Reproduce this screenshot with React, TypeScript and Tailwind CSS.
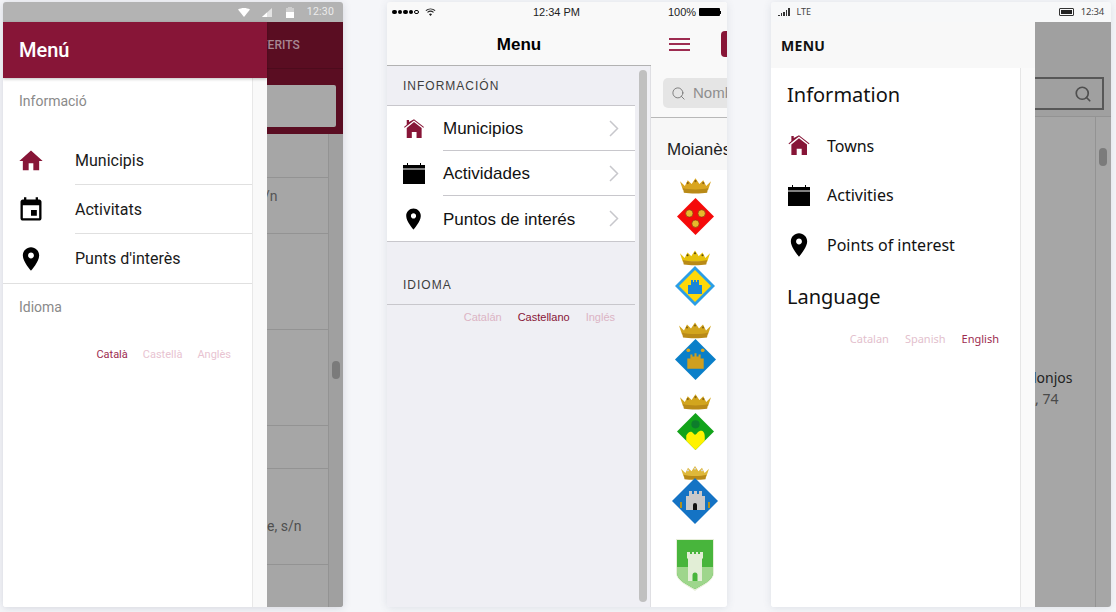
import type { ReactNode } from "react";
import { Search } from "lucide-react";

function MdHome({ className }: { className?: string }) {
  return (
    <svg viewBox="0 0 24 24" className={className} fill="currentColor">
      <path d="M10 20v-6h4v6h5v-8h3L12 3 2 12h3v8z" />
    </svg>
  );
}

function MdEvent({ className }: { className?: string }) {
  return (
    <svg viewBox="0 0 24 24" className={className} fill="currentColor">
      <path d="M17 12h-5v5h5v-5zM16 1v2H8V1H6v2H5c-1.11 0-1.99.9-1.99 2L3 19c0 1.1.89 2 2 2h14c1.1 0 2-.9 2-2V5c0-1.1-.9-2-2-2h-1V1h-2zm3 18H5V8h14v11z" />
    </svg>
  );
}

function Pin({ className }: { className?: string }) {
  return (
    <svg viewBox="0 0 24 24" className={className} fill="currentColor">
      <path d="M12 2C8.13 2 5 5.13 5 9c0 5.25 7 13 7 13s7-7.75 7-13c0-3.87-3.13-7-7-7zm0 9.5c-1.38 0-2.5-1.12-2.5-2.5s1.12-2.5 2.5-2.5 2.5 1.12 2.5 2.5-1.12 2.5-2.5 2.5z" />
    </svg>
  );
}

// ios style house: roof line sits apart from the body, with a chimney
function IosHome({ className }: { className?: string }) {
  return (
    <svg viewBox="0 0 22 22" className={className} fill="currentColor">
      <path d="M3 1h2.5v2.2L11 .2l11 8.6-.7.9L11 1.7.7 9.7 0 8.8l3-2.4z" />
      <path d="M11 3.400l8.400 6.500V21h-5.600v-6.600H8.600V21H3V9.900z" />
    </svg>
  );
}

function IosCalendar({ className }: { className?: string }) {
  return (
    <svg viewBox="0 0 22 21" className={className} fill="currentColor">
      <path d="M0 2h4V0h1v2h12V0h1v2h4v3.600H0z" />
      <path d="M0 6.600h22V21H0z" />
    </svg>
  );
}

function Disclosure() {
  return (
    <svg viewBox="0 0 10 17" className="w-[10px] h-[17px]" fill="none" stroke="#c7c7cc" strokeWidth="1.500">
      <path d="M1 1l7.500 7.500L1 16" />
    </svg>
  );
}

function Crown({ band, dots, className }: { band: string; dots: string; className: string }) {
  return (
    <svg viewBox="0 0 32 16" className={`${className} block`}>
      <path d="M0 3l5 5 3-6 4 4 4-6 4 6 4-4 3 6 5-5-3 9H3z" fill={band} />
      <path d="M3 10c6 2 20 2 26 0l-1 5c-6 1-18 1-24 0z" fill="#b98a17" />
      <circle cx="8" cy="5" r="1.100" fill={dots} />
      <circle cx="16" cy="3" r="1.100" fill={dots} />
      <circle cx="24" cy="5" r="1.100" fill={dots} />
    </svg>
  );
}

function Arms() {
  return (
    <div className="flex flex-col items-center pl-[12px]">
      {/* red, three bowls */}
      <div className="h-[72px] pt-[8px] flex flex-col items-center">
        <Crown band="#d9a520" dots="#8a5f10" className="w-[31px] h-[16px]" />
        <svg viewBox="0 0 36 36" className="w-[37px] h-[37px] mt-[4px]">
          <path d="M18 0l18 18-18 18L0 18z" fill="#f50a0a" />
          <circle cx="12" cy="15" r="3.600" fill="#e8b92c" stroke="#8c3b12" strokeWidth="0.700" />
          <circle cx="24" cy="15" r="3.600" fill="#e8b92c" stroke="#8c3b12" strokeWidth="0.700" />
          <circle cx="18" cy="25" r="3.600" fill="#e8b92c" stroke="#8c3b12" strokeWidth="0.700" />
        </svg>
      </div>
      {/* yellow, blue castle */}
      <div className="h-[72px] pt-[8px] flex flex-col items-center">
        <Crown band="#e6c10c" dots="#5b4a10" className="w-[30px] h-[16px]" />
        <svg viewBox="0 0 40 40" className="w-[40px] h-[40px]">
          <path d="M20 0l20 20-20 20L0 20z" fill="#2b9ee6" />
          <path d="M20 4l16 16-16 16L4 20z" fill="#ffd809" />
          <path d="M13 28v-9h3v-5h2v2h1v-2h2v2h1v-2h2v5h3v9z" fill="#1b86d8" />
        </svg>
      </div>
      {/* blue, gold castle */}
      <div className="h-[72px] pt-[8px] flex flex-col items-center">
        <Crown band="#d2a51d" dots="#8a6410" className="w-[32px] h-[17px]" />
        <svg viewBox="0 0 40 40" className="w-[41px] h-[41px]">
          <path d="M20 0l20 20-20 20L0 20z" fill="#0a7fc9" />
          <circle cx="13" cy="11" r="1.800" fill="#d9a520" />
          <circle cx="27" cy="11" r="1.800" fill="#d9a520" />
          <path d="M12 29v-10h3v-4h2v2h2v-3h2v3h2v-2h2v4h3v10z" fill="#cf9f1f" />
        </svg>
      </div>
      {/* green, yellow mount */}
      <div className="h-[72px] pt-[8px] flex flex-col items-center">
        <Crown band="#d2a51d" dots="#8a6410" className="w-[31px] h-[16px]" />
        <svg viewBox="0 0 36 36" className="w-[37px] h-[37px] mt-[3px]">
          <path d="M18 0l18 18-18 18L0 18z" fill="#12a31a" />
          <path d="M18 36l-9-9v-5c2-4 5-5 7-2 1 2 3 1 4-1 3-3 7-2 7 4v4z" fill="#fff200" />
          <circle cx="18" cy="11" r="4" fill="#0d7d2c" />
        </svg>
      </div>
      {/* blue, grey castle */}
      <div className="h-[72px] pt-[8px] flex flex-col items-center">
        <Crown band="#dfb83a" dots="#d8d8e0" className="w-[34px] h-[14px]" />
        <svg viewBox="0 0 46 46" className="w-[46px] h-[46px] -mt-[2px]">
          <path d="M23 0l23 23-23 23L0 23z" fill="#1473c4" />
          <path d="M14 32V18h3v-5h3v3h2v-3h3v3h2v-3h3v5h3v14z" fill="#c9c9c9" />
          <path d="M21 32v-5a2 2 0 014 0v5z" fill="#111" />
          <path d="M8 24h2v6H8zM36 24h2v6h-2z" fill="#b2901c" />
        </svg>
      </div>
      {/* green shield */}
      <div className="pt-[9px]">
        <svg viewBox="0 0 38 52" className="w-[38px] h-[52px] block">
          <path d="M0 0h38v34c0 8-12 13-19 18C12 47 0 42 0 34z" fill="#e6eed8" />
          <path d="M1 1h36v33c0 7-11 12-18 16-7-4-18-9-18-16z" fill="#48b53c" />
          <path d="M1 28h36v6c0 7-11 12-18 16-7-4-18-9-18-16z" fill="#9ed68c" />
          <path d="M12 42V20l-1-1v-6h3v2h2v-2h2v2h2v-2h2v2h2v-2h3v6l-1 1v22z" fill="#e2eed6" />
          <path d="M16.500 42v-6a2.500 2.500 0 015 0v6z" fill="#48b53c" />
        </svg>
      </div>
    </div>
  );
}

// what sits behind the first drawer: a dimmed list
function DimRow({ h, children }: { h: string; children?: ReactNode }) {
  return (
    <div className={`${h} border-b border-[#939393] overflow-hidden`}>{children}</div>
  );
}

function AndroidPhone() {
  return (
    <div className="w-[340px] h-[605px] rounded-[3px] overflow-hidden shadow-[0_1px_8px_rgba(60,70,100,0.18)] flex flex-col font-['Roboto',sans-serif]">
      <div className="h-[20px] bg-[#b3b3b3] flex items-center justify-end gap-[12px] pr-[9px]">
        <svg viewBox="0 0 12 9" className="w-[12px] h-[9px]">
          <path d="M0 1.500C3.500-.5 8.500-.5 12 1.500L6 9z" fill="#fff" />
        </svg>
        <svg viewBox="0 0 10 9" className="w-[10px] h-[9px]">
          <path d="M10 0v9H0z" fill="#e3e3e3" />
          <path d="M5 4.500V9H0z" fill="#fff" />
        </svg>
        <svg viewBox="0 0 8 11" className="w-[8px] h-[11px] ml-[2px]">
          <path d="M2 0h4v1h2v10H0V1h2z" fill="#cfcfcf" />
          <path d="M0 5h8v6H0z" fill="#fff" />
        </svg>
        <span className="text-[10.500px] leading-none text-[#ececec] ml-[1px] tracking-[0.2px]">12:30</span>
      </div>
      <div className="flex-1 flex min-h-0">
        <div className="w-[264px] flex flex-col z-10">
          <div className="h-[56px] bg-[#871537] shadow-[0_1px_3px_rgba(0,0,0,0.25)] flex items-center pl-[16px] text-[20px] font-medium text-white z-10">
            Menú
          </div>
          <div className="flex-1 flex bg-[#f9f9f9]">
            <div className="w-[250px] bg-white border-r border-[#e8e8e8]">
              <div className="h-[50px] pl-[16px] pt-[14px] text-[14px] leading-[18px] text-[#8a8a8a]">Informació</div>
              <div className="pt-[8px]">
                {[
                  { label: "Municipis", icon: <MdHome className="w-[28px] h-[28px] text-[#871537]" /> },
                  { label: "Activitats", icon: <MdEvent className="w-[28px] h-[28px] text-black" /> },
                  { label: "Punts d'interès", icon: <Pin className="w-[28px] h-[28px] text-black" /> },
                ].map((row, i) => (
                  <div key={row.label} className="h-[49px] flex items-center">
                    <div className="w-[72px] pl-[14px] shrink-0">{row.icon}</div>
                    <div className={`flex-1 h-full flex items-center text-[16px] text-[#1a1a1a] ${i < 2 ? "border-b border-[#e0e0e0] pt-[1px]" : ""}`}>
                      {row.label}
                    </div>
                  </div>
                ))}
              </div>
              <div className="border-t border-[#e0e0e0] pl-[16px] pt-[14px] text-[14px] leading-[18px] text-[#8a8a8a]">Idioma</div>
              <div className="flex justify-end gap-[15px] pr-[21px] pt-[32px] text-[11px] leading-[14px]">
                <span className="text-[#9d2b50]">Català</span>
                <span className="text-[#e8c3d1]">Castellà</span>
                <span className="text-[#e8c3d1]">Anglès</span>
              </div>
            </div>
          </div>
        </div>
        <div className="flex-1 min-w-0 flex flex-col bg-[#a6a6a6]">
          <div className="h-[112px] bg-[#5a0d22] flex flex-col">
            <div className="h-[47px] border-b border-[#4d0b1d] flex items-center overflow-hidden text-[12px] font-medium text-[#a88893]">
              <span className="-ml-[6px]">FERITS</span>
            </div>
            <div className="pt-[16px] pr-[7px]">
              <div className="h-[42px] bg-[#a8a8a8] rounded-r-[2px]" />
            </div>
          </div>
          <div className="flex-1 flex min-h-0">
            <div className="w-[62px] border-r border-[#939393] text-[#555]">
              <DimRow h="h-[44px]" />
              <DimRow h="h-[56px]"><span className="block pt-[9px] leading-[18px] -ml-[3px] text-[14px]">/n</span></DimRow>
              <DimRow h="h-[96px]" />
              <DimRow h="h-[96px]" />
              <DimRow h="h-[43px]" />
              <DimRow h="h-[96px]"><span className="block pt-[48px] leading-[18px] text-[14px] text-[#4f4f4f] whitespace-nowrap">e, s/n</span></DimRow>
            </div>
            <div className="flex-1 bg-[#a0a0a0] pl-[3px] pt-[227px]">
              <div className="w-[8px] h-[18px] rounded-[4px] bg-[#7b7b7b]" />
            </div>
          </div>
        </div>
      </div>
    </div>
  );
}

function IosPhone() {
  return (
    <div className="w-[340px] h-[605px] rounded-[3px] overflow-hidden shadow-[0_1px_8px_rgba(60,70,100,0.12)] flex font-['Liberation_Sans',sans-serif]">
      <div className="w-[264px] flex flex-col bg-[#efeff4]">
        <div className="h-[64px] bg-[#f9f9f9] border-b border-[#b2b2b2] flex flex-col">
          <div className="h-[20px] flex items-center pl-[5px]">
            <div className="flex gap-[1px]">
              {[0, 1, 2, 3].map((d) => (
                <div key={d} className="w-[4.500px] h-[4.500px] rounded-full bg-black" />
              ))}
              <div className="w-[4.500px] h-[4.500px] rounded-full border-[0.5px] border-black" />
            </div>
            <svg viewBox="0 0 12 9" className="w-[11px] h-[8px] ml-[6px]" fill="none" stroke="#222" strokeWidth="1.200">
              <path d="M.8 3c3-2.600 7.400-2.600 10.400 0M2.600 5c2-1.700 4.800-1.700 6.800 0" />
              <path d="M6 9L4.300 6.900c1-.8 2.400-.8 3.400 0z" fill="#222" stroke="none" />
            </svg>
            <span className="flex-1 text-right pr-[71px] text-[11px] font-medium text-[#222]">12:34 PM</span>
          </div>
          <div className="flex-1 flex items-center justify-center pt-[2px] text-[17px] font-bold text-black">Menu</div>
        </div>
        <div className="flex-1 flex min-h-0">
          <div className="w-[249px] flex flex-col">
            <div className="h-[40px] flex items-center pl-[16px] text-[12px] tracking-[1px] text-[#3d3d3d] border-b border-[#c8c7cc]">
              INFORMACIÓN
            </div>
            <div className="bg-white border-b border-[#c8c7cc]">
              {[
                { label: "Municipios", icon: <IosHome className="w-[22px] h-[20px] text-[#871537]" /> },
                { label: "Actividades", icon: <IosCalendar className="w-[22px] h-[21px] text-black" /> },
                { label: "Puntos de interés", icon: <Pin className="w-[28px] h-[28px] text-black" /> },
              ].map((row, i) => (
                <div key={row.label} className="h-[45px] flex items-center">
                  <div className="w-[56px] shrink-0 pl-[14px] flex justify-center pr-[17px]">{row.icon}</div>
                  <div className={`flex-1 h-full flex items-center justify-between pr-[16px] text-[17px] text-[#111] ${i < 2 ? "border-b border-[#c8c7cc]" : ""}`}>
                    <span className="pt-[2px]">{row.label}</span>
                    <Disclosure />
                  </div>
                </div>
              ))}
            </div>
            <div className="h-[63px] flex items-end pb-[11px] pl-[16px] text-[12px] leading-[16px] tracking-[1px] text-[#3d3d3d] border-b border-[#c8c7cc]">
              IDIOMA
            </div>
            <div className="flex justify-end gap-[16px] pr-[20px] pt-[6px] text-[11px] leading-[13px]">
              <span className="text-[#dcb4c4]">Catalán</span>
              <span className="text-[#871537]">Castellano</span>
              <span className="text-[#dcb4c4]">Inglés</span>
            </div>
          </div>
          <div className="flex-1 pt-[4px] pb-[5px] pl-[4px] pr-[3px] border-r border-[#dfdfe3]">
            <div className="w-[8px] h-full rounded-[4px] bg-[#c0c0c0]" />
          </div>
        </div>
      </div>
      <div className="flex-1 min-w-0 flex flex-col bg-white overflow-hidden">
        <div className="h-[116px] bg-[#f9f9f9] border-b border-[#b8b8b8] flex flex-col">
          <div className="h-[20px] flex items-center pl-[17px] text-[11px] font-medium text-[#222]">
            100%
            <div className="ml-[3px] w-[21px] h-[8px] bg-black rounded-[1px]" />
            <div className="w-[1px] h-[3px] bg-black" />
          </div>
          <div className="h-[44px] flex items-center justify-between">
            <div className="ml-[18px] w-[21px] flex flex-col gap-[3.500px]">
              <div className="h-[2px] bg-[#9d2b50]" />
              <div className="h-[2px] bg-[#9d2b50]" />
              <div className="h-[2px] bg-[#9d2b50]" />
            </div>
            <div className="w-[6px] h-[26px] bg-[#871537] rounded-l-[4px]" />
          </div>
          <div className="pl-[12px] pt-[12px]">
            <div className="h-[30px] bg-[#e5e5e5] rounded-l-[5px] flex items-center pl-[8px] overflow-hidden">
              <Search size={15} strokeWidth={1.5} className="text-[#7a7a7a] shrink-0" />
              <span className="ml-[7px] text-[15px] text-[#8e8e8e] whitespace-nowrap">Nombre</span>
            </div>
          </div>
        </div>
        <div className="h-[52px] bg-[#f7f7f7] flex items-center pl-[16px] pt-[11px] text-[17px] text-[#222] whitespace-nowrap">Moianès</div>
        <Arms />
      </div>
    </div>
  );
}

function WindowsPhone() {
  return (
    <div className="w-[340px] h-[605px] rounded-[3px] overflow-hidden shadow-[0_1px_8px_rgba(60,70,100,0.12)] flex flex-col font-['Noto_Sans',sans-serif]">
      <div className="h-[20px] bg-[#f7f8f9] flex items-center pl-[7px] pr-[7px] text-[9px] text-[#444]">
        <div className="flex items-end gap-[1px] h-[8px]">
          <div className="w-[1.500px] h-[1.500px] bg-[#333]" />
          <div className="w-[1.500px] h-[3px] bg-[#333]" />
          <div className="w-[1.500px] h-[4.500px] bg-[#333]" />
          <div className="w-[1.500px] h-[6px] bg-[#333]" />
          <div className="w-[1.500px] h-[8px] bg-[#333]" />
        </div>
        <span className="ml-[7px]">LTE</span>
        <div className="ml-auto w-[15px] h-[8px] border border-[#333] p-[1px] rounded-[1px]">
          <div className="h-full bg-[#222]" />
        </div>
        <span className="ml-[7px] text-[9.500px] tracking-[-0.2px]">12:34</span>
      </div>
      <div className="flex-1 flex min-h-0">
        <div className="w-[264px] flex flex-col">
          <div className="h-[46px] bg-[#f8f8f8] flex items-center pl-[10px] text-[14px] font-bold tracking-[0.3px] text-[#111]">MENU</div>
          <div className="flex-1 flex bg-[#fafafa]">
            <div className="w-[250px] bg-white border-r border-[#e6e6e6] text-[#111]">
              <div className="pl-[16px] pt-[12px] text-[20px] leading-[30px]">Information</div>
              <div className="pt-[11px]">
                {[
                  { label: "Towns", icon: <IosHome className="w-[22px] h-[21px] text-[#871537]" /> },
                  { label: "Activities", icon: <IosCalendar className="w-[22px] h-[21px] text-black" /> },
                  { label: "Points of interest", icon: <Pin className="w-[28px] h-[28px] text-black" /> },
                ].map((row) => (
                  <div key={row.label} className="h-[49.500px] flex items-center">
                    <div className="w-[56px] shrink-0 flex justify-center">{row.icon}</div>
                    <span className="text-[16px]">{row.label}</span>
                  </div>
                ))}
              </div>
              <div className="pl-[16px] pt-[12px] text-[20px] leading-[30px]">Language</div>
              <div className="flex justify-end gap-[16px] pr-[21px] pt-[19px] text-[11px] leading-[15px]">
                <span className="text-[#e3bfcd]">Catalan</span>
                <span className="text-[#e3bfcd]">Spanish</span>
                <span className="text-[#9d2b50]">English</span>
              </div>
            </div>
          </div>
        </div>
        <div className="flex-1 min-w-0 flex flex-col bg-[#a6a6a6]">
          <div className="h-[95px] bg-[#a0a0a0] border-b border-[#939393] pt-[55px] pr-[7px]">
            <div className="h-[33px] border-2 border-l-0 border-[#575757] flex items-center justify-end pr-[10px]">
              <Search size={18} strokeWidth={2.25} className="text-[#4f4f4f]" />
            </div>
          </div>
          <div className="flex-1 flex min-h-0">
            <div className="w-[61px] border-r border-[#939393] overflow-hidden pt-[251px]">
              <div className="text-[14px] leading-[20px] text-[#222] -ml-[2px] whitespace-nowrap">lonjos</div>
              <div className="text-[14px] leading-[20px] text-[#4a4a4a] mt-[1px]">, 74</div>
            </div>
            <div className="flex-1 pl-[3px] pt-[31px]">
              <div className="w-[8px] h-[18px] rounded-[4px] bg-[#7b7b7b]" />
            </div>
          </div>
        </div>
      </div>
    </div>
  );
}

export default function App() {
  return (
    <div className="w-[1116px] h-[612px] overflow-hidden bg-[#f5f6f9] flex gap-[44px] pl-[3px] pt-[2px]">
      <AndroidPhone />
      <IosPhone />
      <WindowsPhone />
    </div>
  );
}
